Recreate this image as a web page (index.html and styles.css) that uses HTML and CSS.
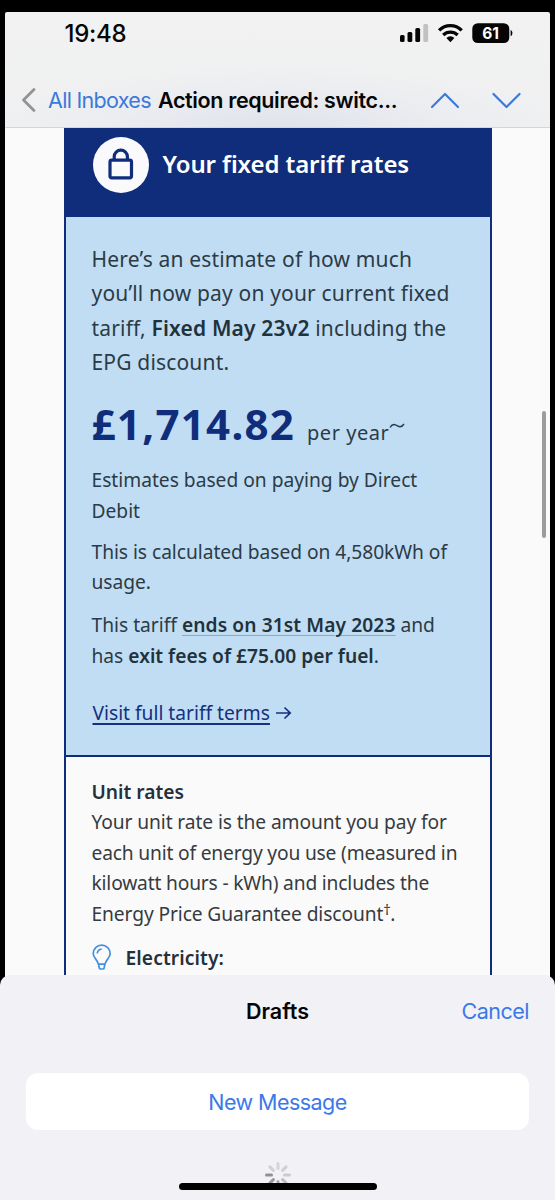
FILE: index.html
```
<!DOCTYPE html>
<html lang="en">
<head>
<meta charset="utf-8">
<title>Mail</title>
<link rel="stylesheet" href="styles.css">
</head>
<body>
<div class="screen">
  <header class="top">
    <div class="status">
      <span class="time">19:48</span>
      <svg class="status-icons" width="116" height="24" viewBox="0 0 116 24">
        <g fill="#050505"><rect x="1" y="14" width="4.600" height="7" rx="1.500"/><rect x="8.500" y="11" width="4.800" height="10" rx="1.500"/><rect x="16.300" y="7" width="4.800" height="14" rx="1.500"/></g>
        <rect x="24.300" y="3" width="4.800" height="18" rx="1.500" fill="#c0c1c3"/>
        <g fill="none" stroke="#050505" stroke-width="3.300"><path d="M40.100 9.300a15.800 15.800 0 0 1 22.600 0"/><path d="M44.200 14a10.300 10.300 0 0 1 14.400 0"/></g>
        <path d="M51.400 21.200l-4-4.200a5.700 5.700 0 0 1 8 0z" fill="#050505"/>
        <rect x="73.300" y="2.200" width="37" height="19.800" rx="5.500" fill="#050505"/>
        <path d="M111.600 9c2.400.8 2.400 5.400 0 6.200z" fill="#050505"/>
        <text x="91.500" y="17.600" class="battery-text" text-anchor="middle">61</text>
      </svg>
    </div>
    <nav class="nav">
      <svg class="back" width="16" height="26" viewBox="0 0 16 26"><path d="M13 2.500L2.500 13 13 23.500" fill="none" stroke="#929395" stroke-width="2.800" stroke-linecap="round" stroke-linejoin="round"/></svg>
      <span class="inbox">All Inboxes</span>
      <span class="subject">Action required: switc...</span>
      <svg class="arrows" width="92" height="20" viewBox="0 0 92 20"><g fill="none" stroke="#3b79db" stroke-width="2.200" stroke-linecap="round" stroke-linejoin="round"><path d="M2 17L15 4 28 17"/><path d="M63.500 4L76.500 17 89.500 4"/></g></svg>
    </nav>
  </header>
  <main class="mail">
    <article class="card">
      <div class="card-head">
        <svg width="56" height="56" viewBox="0 0 56 56"><circle cx="28" cy="28" r="28" fill="#fafafc"/><rect x="17" y="23.200" width="21.500" height="17.600" rx="1.800" fill="none" stroke="#102d7c" stroke-width="3.200"/><path d="M21.200 23v-3.200a6.600 6.600 0 0 1 13.200 0v3.200" fill="none" stroke="#102d7c" stroke-width="3.200"/></svg>
        <h1>Your fixed tariff rates</h1>
      </div>
      <section class="estimate">
        <p class="intro">Here’s an estimate of how much<br>you’ll now pay on your current fixed<br>tariff, <b>Fixed May 23v2</b> including the<br>EPG discount.</p>
        <div class="price"><strong>£1,714.82</strong><span class="per">per year</span><svg width="16" height="6" viewBox="0 0 16 6"><path d="M1 4.500C4-.5 7 2 9 3.200S13 4 15 1" fill="none" stroke="#2a3a48" stroke-width="1.400"/></svg></div>
        <p class="basis">Estimates based on paying by Direct<br>Debit</p>
        <p class="usage">This is calculated based on 4,580kWh of<br>usage.</p>
        <p class="ends">This tariff <b class="date">ends on 31st May 2023</b> and<br>has <b>exit fees of £75.00 per fuel</b>.</p>
        <p class="terms"><a>Visit full tariff terms</a><svg width="17" height="14" viewBox="0 0 17 14"><path d="M1 7h14M9.500 1.500L15.200 7l-5.700 5.500" fill="none" stroke="#15307e" stroke-width="1.700"/></svg></p>
      </section>
      <section class="unit">
        <h2>Unit rates</h2>
        <p>Your unit rate is the amount you pay for<br><span class="snug">each unit of energy you use (measured in</span><br><span class="snug">kilowatt hours - kWh) and includes the</span><br>Energy Price Guarantee discount<sup>†</sup>.</p>
        <div class="fuel">
          <svg width="20" height="27" viewBox="0 0 20 27"><g fill="none" stroke="#4390df" stroke-width="1.700"><path d="M6.400 20.200C5.600 15.500 1.200 14.300 1.200 9.600a8.500 8.500 0 0 1 17 0c0 4.700-4.400 5.900-5.200 10.600zM6.600 20.200l.6 3.600q.2 1.200 1.400 1.200h2.200q1.200 0 1.400-1.200l.6-3.600M5.200 9.500q.5-4 4.500-4.500"/></g></svg>
          <b>Electricity:</b>
        </div>
      </section>
    </article>
    <i class="scroll"></i>
  </main>
</div>
<section class="sheet">
  <div class="sheet-head"><strong>Drafts</strong><span class="cancel">Cancel</span></div>
  <div class="button">New Message</div>
  <svg class="spinner" width="28" height="28" viewBox="-14 -14 28 28"><g stroke-width="3" stroke-linecap="round"><path d="M0-6.500v-5" stroke="#d4d4d9"/><path d="M4.600-4.600l3.500-3.500" stroke="#d0d0d5"/><path d="M6.500 0h5" stroke="#cbcbd0"/><path d="M4.600 4.600l3.500 3.500" stroke="#bdbdc2"/><path d="M0 6.500v5" stroke="#a5a5aa"/><path d="M-4.600 4.600l-3.500 3.500" stroke="#98989c"/><path d="M-6.500 0h-5" stroke="#919195"/><path d="M-4.600-4.600l-3.500-3.500" stroke="#d0d0d5"/></g></svg>
  <i class="home"></i>
</section>
</body>
</html>
```
FILE: styles.css
```
* { box-sizing: border-box; }
body {
  margin: 0;
  width: 555px;
  height: 1200px;
  overflow: hidden;
  background: #000;
  font-family: "Noto Sans", sans-serif;
  color: #2b3b46;
}
h1, h2, p { margin: 0; }
b { font-weight: 600; color: #22323b; }
svg { display: block; flex: none; }

.screen {
  height: 1000px;
  margin: 0 5px;
  padding-top: 12px;
}
.top {
  height: 116px;
  border-bottom: 1px solid #d3d5da;
  border-radius: 2px 2px 0 0;
  background: radial-gradient(ellipse 280px 62px at 50% 100%, #e0e3ec, rgba(228, 231, 239, 0.4) 60%, transparent), linear-gradient(#f2f2f2, #eff0f1);
  color: #060606;
  font-family: Inter, sans-serif;
}
.status {
  display: flex;
  justify-content: space-between;
  height: 42px;
  padding: 0 35px 0 59.5px;
}
.time { font-size: 24px; font-weight: 550; line-height: 44px; letter-spacing: -0.3px; }
.status-icons { margin-top: 9px; }
.battery-text { font: 700 15.5px Inter, sans-serif; fill: #fff; }
.nav {
  display: flex;
  align-items: center;
  height: 48px;
  margin-top: 22px;
  padding-left: 16px;
  white-space: nowrap;
}
.inbox { width: 110px; margin-left: 11px; font-size: 21.5px; letter-spacing: -0.7px; color: #3b79db; }
.subject { width: 240px; font-size: 21.5px; font-weight: 600; letter-spacing: -0.36px; }
.arrows { margin-left: 32px; }

.mail { position: relative; height: 872px; padding: 0 58.500px; background: #fafafa; }
.card { height: 872px; border: solid #102d7c; border-width: 0 2px; }
.card-head {
  display: flex;
  align-items: center;
  gap: 14px;
  height: 89px;
  padding: 0 0 15px 27px;
  background: #102d7c;
}
h1 { margin-top: -3px; color: #fff; font-size: 24px; font-weight: 600; letter-spacing: -0.09px; }
.estimate {
  height: 540px;
  padding: 25px 0 0 26px;
  border-bottom: 2px solid #102d7c;
  background: #c1ddf3;
  white-space: nowrap;
}
.intro { font-size: 21px; line-height: 34.33px; letter-spacing: 0.17px; }
.price { display: flex; align-items: baseline; height: 60px; margin-top: 15px; line-height: 60px; }
.price strong { width: 215.500px; color: #102d7c; font-size: 42px; letter-spacing: 1.3px; }
.per { font-size: 20px; letter-spacing: 0.55px; }
.price svg { align-self: flex-start; margin-top: 29px; }
.basis, .usage, .ends, .terms, .unit { font-size: 19.2px; line-height: 30.5px; }
.basis { margin-top: 11px; }
.usage { margin-top: 10.300px; letter-spacing: -0.04px; }
.ends { margin-top: 12.700px; letter-spacing: 0; }
.date { text-decoration: underline; text-decoration-color: #8fa6c4; text-decoration-thickness: 1px; text-underline-offset: 3px; letter-spacing: 0.09px; }
.terms { display: flex; align-items: center; gap: 5px; margin-top: 26.600px; padding-left: 1px; color: #15307e; }
.terms a { text-decoration: underline; text-decoration-thickness: 1.5px; text-underline-offset: 3px; }
.unit { padding: 19.500px 0 0 26px; color: #363b41; white-space: nowrap; }
h2 { font-size: 19.2px; font-weight: 600; color: #26303a; }
.unit p { letter-spacing: -0.1px; }
.unit .snug { letter-spacing: -0.17px; }
sup { font-size: 15px; line-height: 0; vertical-align: 6px; letter-spacing: -0.8px; }
.fuel { display: flex; align-items: center; gap: 14px; margin-top: 13.500px; letter-spacing: 0.1px; }
.fuel b { color: #26303a; }
.scroll { position: absolute; right: 4px; top: 283px; width: 4px; height: 127px; border-radius: 2px; background: #9c9c9c; }

.sheet {
  position: relative;
  height: 225px;
  margin-top: -25px;
  padding: 0 26px;
  border-radius: 10px 10px 0 0;
  background: #f1f1f6;
  font-family: Inter, sans-serif;
  font-size: 21.5px;
}
.sheet-head {
  display: grid;
  grid-template-columns: 1fr auto 1fr;
  align-items: center;
  height: 98px;
  padding-bottom: 26.500px;
  color: #060606;
}
.sheet-head strong { grid-column: 2; font-weight: 600; }
.cancel { justify-self: end; letter-spacing: -0.5px; color: #3b79e8; }
.button {
  height: 57px;
  border-radius: 12px;
  background: #fff;
  color: #3b79e8;
  line-height: 58px;
  text-align: center;
  letter-spacing: -0.55px;
}
.spinner { margin: 31px auto 0; }
.home { position: absolute; left: 179px; bottom: 10.500px; width: 198px; height: 6.500px; border-radius: 4px; background: #000; }
```
